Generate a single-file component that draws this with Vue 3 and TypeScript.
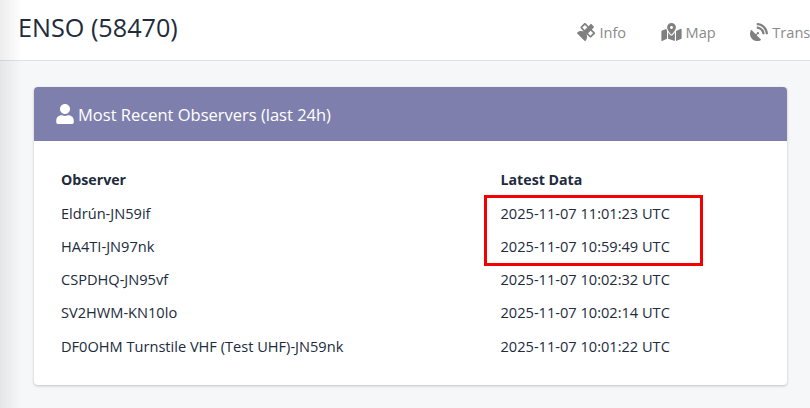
<script setup lang="ts">
const rows: [string, string][] = [
  ['Eldrún-JN59if', '2025-11-07 11:01:23 UTC'],
  ['HA4TI-JN97nk', '2025-11-07 10:59:49 UTC'],
  ['CSPDHQ-JN95vf', '2025-11-07 10:02:32 UTC'],
  ['SV2HWM-KN10lo', '2025-11-07 10:02:14 UTC'],
  ['DF0OHM Turnstile VHF (Test UHF)-JN59nk', '2025-11-07 10:01:22 UTC'],
]
</script>

<template>
  <div class="page">
    <header class="topbar">
      <h1 class="title">ENSO (58470)</h1>
      <nav class="nav">
        <a class="tab">
          <svg class="ico" viewBox="0 0 512 512"><path fill-rule="evenodd" d="M502.7 265l-80.3-80.4 47.8-47.9c13.1-13.1 13.1-34.4 0-47.5l-47.5-47.5c-13.1-13.1-34.4-13.1-47.5 0l-47.8 47.9-80.3-80.3C240.8 3.1 232.7 0 224.5 0S208.2 3.1 202 9.3L105.3 106c-12.4 12.4-12.4 32.6 0 45.1l80.3 80.4-9.8 9.8C122.1 217 59.6 225.7 7.6 267.7c-10.4 8.4-11.2 24-1.7 33.4l100.3 100.4 5.3 5.3 100.4 100.4c9.5 9.5 25 8.7 33.4-1.7 42-52 50.7-114.5 26.4-168.2l9.8-9.8 80.3 80.4c6.2 6.2 14.4 9.3 22.5 9.3s16.3-3.1 22.5-9.3l96.7-96.7c12.4-12.4 12.4-32.6 0-45.1zM150.6 128.6l73.9-73.9 68.9 69-73.9 73.9-68.9-69zM383.4 361.4l-69-69 73.9-73.9 69 69-73.9 73.9z"/></svg>
          <span>Info</span>
        </a>
        <a class="tab">
          <svg class="ico map" viewBox="0 0 576 512"><path d="M288 0c-69.59 0-126 56.41-126 126 0 56.26 82.35 158.8 113.9 196.02 6.39 7.54 17.82 7.54 24.2 0C331.65 284.8 414 182.26 414 126 414 56.41 357.59 0 288 0zm0 168c-23.2 0-42-18.8-42-42s18.8-42 42-42 42 18.8 42 42-18.8 42-42 42zM20.12 215.95A32.006 32.006 0 0 0 0 245.66v250.32c0 11.32 11.43 19.06 21.94 14.86L160 448V214.92c-8.84-15.98-16.07-31.54-21.25-46.42L20.12 215.95zM288 359.67c-14.07 0-27.38-6.18-36.51-16.96-19.66-23.2-40.57-49.62-59.49-76.72V448l192 64V266c-18.92 27.09-39.82 53.52-59.49 76.72-9.13 10.77-22.44 16.95-36.51 16.95zm266.06-198.51L416 224v288l139.88-55.95A31.996 31.996 0 0 0 576 426.34V176.02c0-11.32-11.43-19.06-21.94-14.86z"/></svg>
          <span>Map</span>
        </a>
        <a class="tab">
          <svg class="ico" viewBox="0 0 512 512"><path d="M305.44954,462.59c7.39157,7.29792,6.18829,20.09661-3.00038,25.00356-77.713,41.80281-176.72559,29.9105-242.34331-35.7082C-5.49624,386.28227-17.404,287.362,24.41381,209.554c4.89125-9.095,17.68975-10.29834,25.00318-3.00043L166.22872,323.36708l27.39411-27.39452c-.68759-2.60974-1.594-5.00071-1.594-7.81361a32.00407,32.00407,0,1,1,32.00407,32.00455c-2.79723,0-5.20378-.89075-7.79786-1.594l-27.40974,27.41015ZM511.9758,303.06732a16.10336,16.10336,0,0,1-16.002,17.00242H463.86031a15.96956,15.96956,0,0,1-15.89265-15.00213C440.46671,175.5492,336.45348,70.53427,207.03078,63.53328a15.84486,15.84486,0,0,1-15.00191-15.90852V16.02652A16.09389,16.09389,0,0,1,209.031.02425C372.25491,8.61922,503.47472,139.841,511.9758,303.06732Zm-96.01221-.29689a16.21093,16.21093,0,0,1-16.11142,17.29934H367.645a16.06862,16.06862,0,0,1-15.89265-14.70522c-6.90712-77.01094-68.118-138.91037-144.92467-145.22376a15.94,15.94,0,0,1-14.79876-15.89289V112.13393a16.134,16.134,0,0,1,17.29908-16.096C319.45132,104.5391,407.55627,192.64538,415.96359,302.7704Z"/></svg>
          <span>Transmitters</span>
        </a>
      </nav>
    </header>
    <main class="content">
      <section class="card">
        <div class="card-head">
          <svg class="user" viewBox="0 0 448 512"><path d="M224 256c70.7 0 128-57.3 128-128S294.7 0 224 0 96 57.3 96 128s57.3 128 128 128zm89.6 32h-16.7c-22.2 10.2-46.9 16-72.9 16s-50.6-5.8-72.9-16h-16.7C60.2 288 0 348.2 0 422.4V464c0 26.5 21.5 48 48 48h352c26.5 0 48-21.5 48-48v-41.6c0-74.2-60.2-134.4-134.4-134.4z"/></svg>
          <span>Most Recent Observers (last 24h)</span>
        </div>
        <table class="table">
          <thead>
            <tr><th class="c1">Observer</th><th>Latest Data</th></tr>
          </thead>
          <tbody>
            <tr v-for="r in rows" :key="r[0]"><td class="c1">{{ r[0] }}</td><td>{{ r[1] }}</td></tr>
          </tbody>
        </table>
      </section>
    </main>
    <div class="highlight"></div>
    <div class="edge"></div>
  </div>
</template>

<style>
html, body { margin: 0; background: #f5f7f9; }
</style>

<style scoped>
.page {
  position: relative;
  width: 810px;
  height: 408px;
  overflow: hidden;
  background: #f5f7f9;
  font-family: "Open Sans", "Noto Sans", sans-serif;
  color: #212b3d;
}
.topbar {
  height: 60px;
  background: #fff;
  border-bottom: 1px solid #dfe2e6;
  display: flex;
  align-items: center;
  justify-content: space-between;
  padding-left: 18px;
  overflow: hidden;
}
.title {
  margin: -7px 0 0;
  font-size: 25.2px;
  font-weight: 400;
  white-space: nowrap;
}
.nav {
  display: flex;
  gap: 34.5px;
  margin-right: -49px;
  flex: none;
  padding-top: 3px;
}
.tab {
  display: flex;
  align-items: center;
  gap: 4px;
  font-size: 14.6px;
  color: #8a8a8a;
  white-space: nowrap;
}
.ico { width: 18px; height: 18px; fill: #808080; }
.ico.map { width: 21px; }
.content { padding: 26px 23px 0 34px; }
.card {
  height: 298px;
  background: #fff;
  border-radius: 4px;
  box-shadow: 0 1px 3px rgba(0, 0, 0, 0.22);
  overflow: hidden;
}
.card-head {
  height: 54px;
  box-sizing: border-box;
  background: #7f7fae;
  color: #fff;
  display: flex;
  align-items: center;
  gap: 4px;
  padding-left: 22px;
  font-size: 16.5px;
}
.user { width: 18px; height: 20px; fill: #fff; }
.table {
  border-collapse: collapse;
  margin: 22px 0 0 27px;
  font-size: 14.6px;
  table-layout: fixed;
  width: 700px;
}
.table th, .table td {
  padding: 0;
  height: 33.2px;
  text-align: left;
  white-space: nowrap;
}
.table th { font-weight: 700; font-size: 14.2px; }
.c1 { width: 439.5px; }
.highlight {
  position: absolute;
  left: 484px;
  top: 195px;
  width: 219px;
  height: 71px;
  box-sizing: border-box;
  border: 3px solid #f40000;
}
.edge {
  position: absolute;
  left: 0;
  top: 0;
  bottom: 0;
  width: 22px;
  background: linear-gradient(to right, rgba(0,0,0,0.07), rgba(0,0,0,0));
}
</style>
